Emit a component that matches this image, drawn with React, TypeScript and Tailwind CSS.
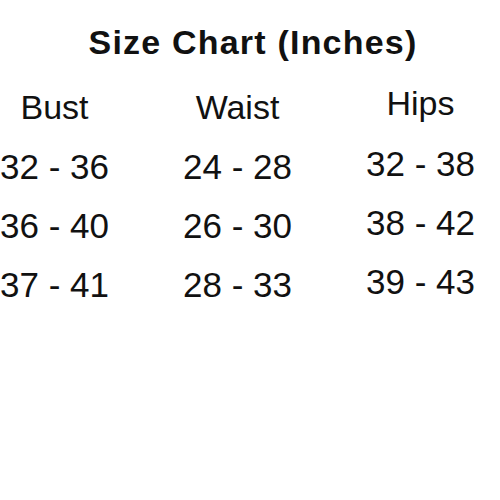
const columns = [
  { label: "Bust", values: ["32 - 36", "36 - 40", "37 - 41"], lift: false },
  { label: "Waist", values: ["24 - 28", "26 - 30", "28 - 33"], lift: false },
  { label: "Hips", values: ["32 - 38", "38 - 42", "39 - 43"], lift: true },
];

const App = () => {
  return (
    <div className="w-[500px] h-[500px] bg-white overflow-hidden text-[#111] font-['Liberation_Sans',Arial,sans-serif]">
      {/* Title */}
      <h1 className="pt-[25px] pl-[6px] text-center text-[34px] leading-none font-bold tracking-[1.2px]">
        Size Chart (Inches)
      </h1>

      {/* Columns */}
      <div className="flex ml-[-37px] mt-[31px]">
        {columns.map((col) => (
          <div
            key={col.label}
            className={
              col.lift
                ? "w-[183px] shrink-0 text-center -mt-[4px]"
                : "w-[183px] shrink-0 text-center"
            }
          >
            <div className="text-[34px] leading-none">{col.label}</div>
            <div
              className={
                col.lift
                  ? "mt-[26px] flex flex-col gap-[24px] text-[35px] leading-none"
                  : "mt-[25px] flex flex-col gap-[24px] text-[35px] leading-none"
              }
            >
              {col.values.map((v) => (
                <div key={v} className="whitespace-nowrap">
                  {v}
                </div>
              ))}
            </div>
          </div>
        ))}
      </div>
    </div>
  );
};

export default App;
